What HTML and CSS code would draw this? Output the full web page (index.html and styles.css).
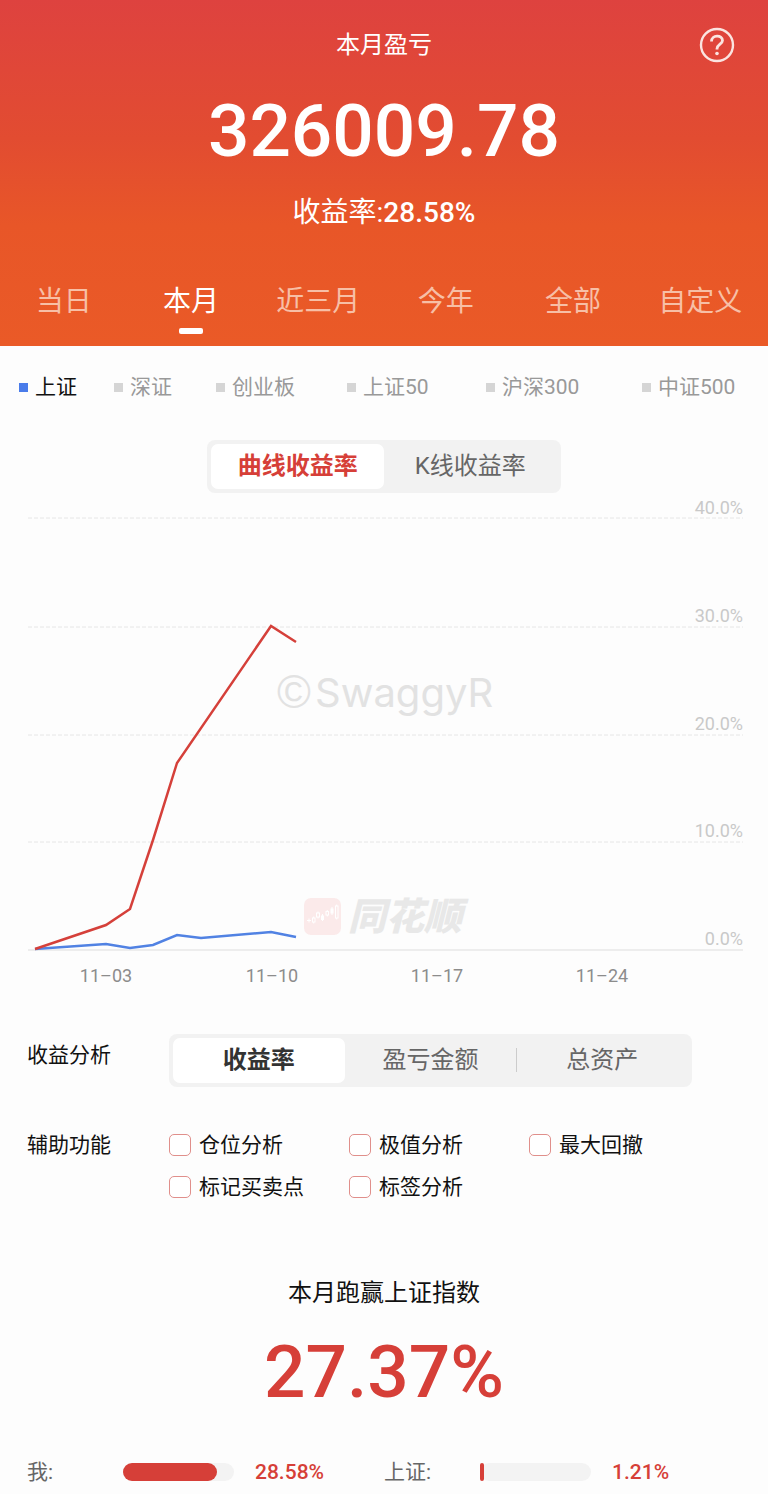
FILE: index.html
```html
<!DOCTYPE html>
<html lang="zh-CN">
<head>
    <meta charset="UTF-8">
    <meta name="viewport" content="width=device-width, initial-scale=1.0">
    <title>本月盈亏</title>
    <link rel="stylesheet" href="styles.css">
</head>
<body>
    <header class="summary">
        <h1>本月盈亏</h1>
        <button class="help" aria-label="帮助">
            <svg viewBox="0 0 36 36" width="36" height="36" fill="none" stroke="currentColor">
                <circle cx="18" cy="18" r="16" stroke-width="2.400"/>
                <path d="M12.500 14.500C12.500 7.500 23.500 7.500 23.500 13.500C23.500 17 18 17.500 18 21.800V22.500" stroke-width="2.800"/>
                <circle cx="18" cy="26.500" r="1.800" fill="currentColor" stroke="none"/>
            </svg>
        </button>
        <div class="amount">326009.78</div>
        <div class="rate">收益率:<strong>28.58%</strong></div>
        <nav class="tabs">
            <button>当日</button>
            <button class="active">本月</button>
            <button>近三月</button>
            <button>今年</button>
            <button>全部</button>
            <button>自定义</button>
        </nav>
    </header>

    <main>
        <div class="indexes">
            <button class="active">上证</button>
            <button>深证</button>
            <button>创业板</button>
            <button>上证50</button>
            <button>沪深300</button>
            <button>中证500</button>
        </div>

        <div class="segment chart-type">
            <button class="active">曲线收益率</button>
            <button>K线收益率</button>
        </div>

        <svg class="chart" viewBox="0 0 768 500">
            <g class="grid">
                <path d="M28 25H743"/>
                <path d="M28 134H743"/>
                <path d="M28 242H743"/>
                <path d="M28 349H743"/>
            </g>
            <path class="axis" d="M28 457H743"/>

            <g class="watermark">
                <text class="copyright" x="277" y="215">©</text>
                <text x="315" y="214">SwaggyR</text>
            </g>

            <!-- Logo -->
            <g class="brand">
                <rect x="304" y="405" width="37" height="37" rx="7"/>
                <g class="candles">
                    <path d="M307 427.500h4M309 425.500v4"/>
                    <rect x="312.500" y="425" width="2.500" height="4"/>
                    <path d="M313.750 423.500v1.500M313.750 429v1.500"/>
                    <rect x="316.500" y="420" width="3" height="4"/>
                    <path d="M318 418.500v1.500M318 424v1.500"/>
                    <rect class="solid" x="321.500" y="423" width="2" height="3.500"/>
                    <path d="M322.500 421v7"/>
                    <rect x="326" y="418.500" width="2.500" height="3.500"/>
                    <path d="M327.250 417v1.500M327.250 422v1.500"/>
                    <rect class="solid" x="331" y="416" width="2" height="4"/>
                    <path d="M332 414v8"/>
                    <rect x="335.500" y="413" width="2.500" height="12"/>
                    <path d="M336.750 411.500v1.500M336.750 425v1.500"/>
                </g>
                <text x="348" y="437">同花顺</text>
            </g>

            <polyline class="line-index" points="35,456 106,451 130,455 153,452 177,442 201,445 271,439 296,444"/>
            <polyline class="line-mine" points="35,456 106,432 130,416 153,347 177,270 271,133 296,149"/>

            <g class="percents">
                <text x="743" y="21">40.0%</text>
                <text x="743" y="129">30.0%</text>
                <text x="743" y="237">20.0%</text>
                <text x="743" y="344">10.0%</text>
                <text x="743" y="452">0.0%</text>
            </g>
            <g class="dates">
                <text x="106" y="489">11–03</text>
                <text x="272" y="489">11–10</text>
                <text x="437" y="489">11–17</text>
                <text x="602" y="489">11–24</text>
            </g>
        </svg>

        <section class="option-row analysis">
            <h2>收益分析</h2>
            <div class="segment">
                <button class="active">收益率</button>
                <button>盈亏金额</button>
                <button class="divided">总资产</button>
            </div>
        </section>

        <section class="option-row tools">
            <h2>辅助功能</h2>
            <div class="checks">
                <label><input type="checkbox">仓位分析</label>
                <label><input type="checkbox">极值分析</label>
                <label><input type="checkbox">最大回撤</label>
                <label><input type="checkbox">标记买卖点</label>
                <label><input type="checkbox">标签分析</label>
            </div>
        </section>

        <section class="beat">
            <h2>本月跑赢上证指数</h2>
            <div class="beat-value">27.37%</div>
            <div class="compare">
                <div class="compare-item">
                    <span class="name">我:</span>
                    <div class="bar"><div class="fill" style="width: 85%"></div></div>
                    <span class="value">28.58%</span>
                </div>
                <div class="compare-item">
                    <span class="name">上证:</span>
                    <div class="bar short"><div class="fill" style="width: 4%"></div></div>
                    <span class="value">1.21%</span>
                </div>
            </div>
        </section>
    </main>
</body>
</html>
```

FILE: styles.css
```css
* {
    box-sizing: border-box;
}

body {
    margin: 0;
    background: #fdfdfd;
    color: #111;
    font-family: Roboto, 'Noto Sans CJK SC', sans-serif;
    font-size: 21px;
    line-height: 30px;
}

button {
    padding: 0;
    border: none;
    background: none;
    color: inherit;
    font: inherit;
    cursor: pointer;
    white-space: nowrap;
}

h1,
h2 {
    margin: 0;
    font-weight: 400;
}

/* Header */
.summary {
    position: relative;
    padding-top: 29px;
    background: linear-gradient(#de423f, #e24c31 40%, #e85628 65%, #ea5a27);
    color: #fff;
    text-align: center;
}

.summary h1 {
    font-size: 24px;
    line-height: 32px;
}

.help {
    position: absolute;
    top: 27px;
    right: 33px;
    width: 36px;
    height: 36px;
    color: #fbe4e0;
}

.help svg {
    display: block;
}

.amount {
    margin-top: 22px;
    font-size: 73px;
    font-weight: 500;
    line-height: 96px;
}

.rate {
    margin-top: 14px;
    font-size: 28px;
    line-height: 40px;
}

.rate strong {
    font-weight: 500;
}

.tabs {
    display: grid;
    grid-template-columns: repeat(6, 1fr);
    margin-top: 48px;
    padding-right: 4px;
}

.tabs button {
    height: 65px;
    padding-bottom: 23px;
    font-size: 28px;
    line-height: 40px;
    color: #f7bfa6;
}

.tabs .active {
    position: relative;
    color: #fff;
}

.tabs .active::after {
    content: '';
    position: absolute;
    left: 50%;
    bottom: 12px;
    width: 24px;
    height: 6px;
    margin-left: -12px;
    border-radius: 2px;
    background: #fff;
}

/* Index legend */
.indexes {
    display: grid;
    grid-template-columns: 95fr 102fr 131fr 139fr 156fr 107fr;
    padding: 26px 19px 0;
}

.indexes button {
    display: flex;
    align-items: center;
    gap: 7px;
    color: #999;
    line-height: 30px;
}

.indexes button::before {
    content: '';
    width: 9px;
    height: 9px;
    background: #d5d5d5;
}

.indexes .active {
    color: #111;
}

.indexes .active::before {
    background: #4a7cea;
}

/* Segmented switch */
.segment {
    display: grid;
    grid-auto-columns: 1fr;
    grid-auto-flow: column;
    padding: 4px;
    border-radius: 8px;
    background: #f2f2f2;
}

.segment button {
    height: 45px;
    padding-bottom: 1px;
    border-radius: 7px;
    color: #666;
    font-size: 24px;
    line-height: 42px;
}

.segment .active {
    background: #fff;
    color: #333;
    font-weight: 700;
}

.segment .divided {
    position: relative;
}

.segment .divided::before {
    content: '';
    position: absolute;
    left: 0;
    top: 10px;
    height: 24px;
    border-left: 1px solid #ccc;
}

.chart-type {
    width: 46%;
    margin: 38px auto 0;
}

.chart-type .active {
    color: #d63f38;
}

/* Chart */
.chart {
    display: block;
    width: 100%;
}

.grid {
    stroke: #e6e6e6;
    stroke-dasharray: 4 2;
}

.axis {
    stroke: #ddd;
}

.watermark {
    fill: #e2e2e2;
    font-family: Inter, sans-serif;
    font-size: 40px;
}

.watermark .copyright {
    font-family: 'Liberation Sans', sans-serif;
    font-size: 46px;
}

.brand rect {
    fill: #fbeaea;
}

.brand text {
    fill: #e8e8e8;
    font-size: 38px;
    font-style: italic;
    font-weight: 900;
}

.brand .candles rect,
.candles path {
    fill: none;
    stroke: #fff;
}

.brand .candles .solid {
    fill: #fff;
}

.line-index,
.line-mine {
    fill: none;
    stroke-width: 2.500;
}

.line-index {
    stroke: #5182e3;
}

.line-mine {
    stroke: #d5403a;
}

.percents {
    fill: #c9c9c9;
    font-size: 18px;
    text-anchor: end;
}

.dates {
    fill: #8c8c8c;
    font-size: 18px;
    text-anchor: middle;
}

/* Options */
.option-row {
    display: grid;
    grid-template-columns: 142px 1fr;
    padding: 0 27px;
}

.option-row h2 {
    font-size: 21px;
    line-height: 30px;
}

.analysis {
    padding-top: 41px;
    padding-right: 76px;
}

.analysis h2 {
    padding-top: 6px;
}

.tools {
    padding-top: 43px;
}

.checks {
    display: grid;
    grid-template-columns: repeat(3, 180px);
    row-gap: 12px;
}

.checks label {
    display: flex;
    align-items: center;
    gap: 8px;
}

.checks input {
    appearance: none;
    width: 22px;
    height: 22px;
    margin: 0;
    border: 1px solid #e08f8b;
    border-radius: 5px;
    background: #fff;
}

/* Result against the index */
.beat {
    padding: 74px 27px 6px;
    text-align: center;
}

.beat h2 {
    font-size: 24px;
    line-height: 34px;
}

.beat-value {
    margin-top: 14px;
    color: #d63f38;
    font-size: 73px;
    font-weight: 500;
    line-height: 96px;
}

.compare {
    display: grid;
    grid-template-columns: 1fr 1fr;
    margin-top: 37px;
    text-align: left;
}

.compare-item {
    display: grid;
    grid-template-columns: 96px 111px 1fr;
    align-items: center;
}

.compare-item .name {
    color: #666;
}

.bar {
    height: 18px;
    border-radius: 9px;
    background: #f3f3f3;
}

.fill {
    height: 100%;
    border-radius: 9px;
    background: #d63f38;
}

.short .fill {
    border-radius: 2px;
}

.compare-item .value {
    padding-left: 21px;
    color: #d63f38;
    font-weight: 500;
}
```
